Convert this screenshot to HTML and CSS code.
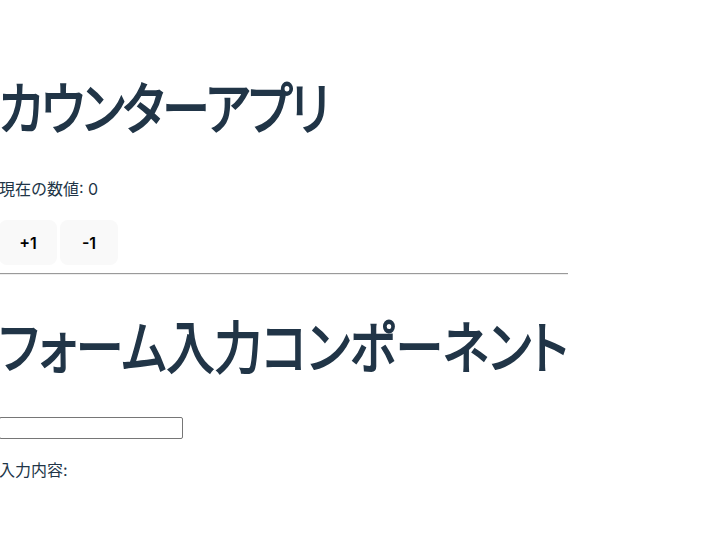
FILE: index.html
```html
<!DOCTYPE html>
<html lang="ja">
<head>
<meta charset="utf-8">
<title>App</title>
<link rel="stylesheet" href="styles.css">
</head>
<body>
<div class="app">
  <section class="counter">
    <h1 class="title title-first">カウンターアプリ</h1>
    <p class="value">現在の数値: 0</p>
    <div class="actions">
      <button class="btn" type="button">+1</button>
      <button class="btn" type="button">-1</button>
    </div>
  </section>
  <hr class="divider">
  <section class="form">
    <h1 class="title title-second">フォーム入力コンポーネント</h1>
    <div class="field"><input class="text-input" type="text"></div>
    <p class="echo">入力内容: </p>
  </section>
</div>
</body>
</html>
```
FILE: styles.css
```css
html, body {
  margin: 0;
  padding: 0;
  background: #ffffff;
}
body {
  font-family: Inter, "Noto Sans CJK JP", sans-serif;
  font-size: 16px;
  line-height: 1.5;
  color: #213547;
}
.app {
  width: 569px;
  margin-left: -1px;
  padding-top: 77px;
}
.title {
  margin: 0;
  font-family: "Noto Sans CJK JP", sans-serif;
  font-feature-settings: "palt";
  font-size: 56px;
  line-height: 56.3px;
  font-weight: 400;
  color: #213547;
  -webkit-text-stroke: 1.8px #213547;
  white-space: nowrap;
  transform: scaleX(0.85);
  transform-origin: left center;
}
.title-first {
  letter-spacing: -2.1px;
}
.value {
  margin: 43.7px 0 0;
}
.actions {
  display: flex;
  gap: 3px;
  margin-top: 19px;
}
.btn {
  width: 58px;
  border-radius: 8px;
  border: 1px solid transparent;
  padding: 0.6em 0;
  font-size: 1em;
  font-weight: 600;
  font-family: Inter, sans-serif;
  line-height: 1.5;
  text-align: center;
  background-color: #f9f9f9;
  color: #000000;
  cursor: pointer;
}
.divider {
  margin: 8px 0 0;
  border: 0;
  border-top: 1px solid #9a9a9a;
  border-bottom: 1px solid #eeeeee;
  height: 0;
}
.title-second {
  margin-top: 40.8px;
  letter-spacing: 0.2px;
}
.field {
  margin-top: 45.2px;
  height: 21.5px;
}
.text-input {
  box-sizing: border-box;
  display: block;
  width: 184px;
  height: 22px;
  margin: 0;
  border: 1px solid #767676;
  border-radius: 2px;
  padding: 1px 2px;
  font-size: 13.33px;
  background: #ffffff;
}
.echo {
  margin: 19px 0 0;
}
```
